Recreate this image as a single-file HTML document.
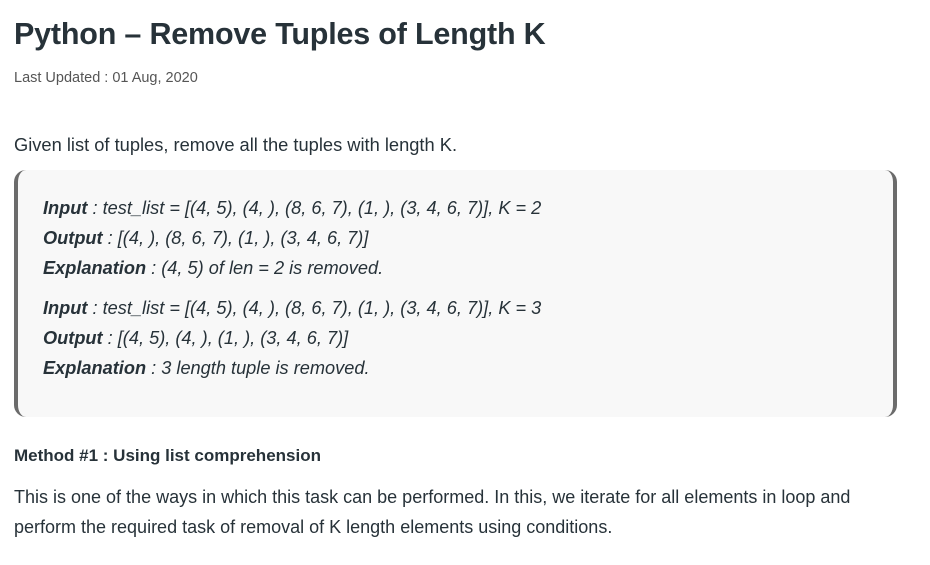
<!DOCTYPE html>
<html><head><style>
body{margin:0;background:#fff;width:930px;height:565px;overflow:hidden;font-family:"Liberation Sans",sans-serif;color:#273239}
h1{position:absolute;left:14px;top:17px;margin:0;font-size:30.5px;font-weight:bold;letter-spacing:-0.2px;color:#273239}
.upd{position:absolute;left:14px;top:70px;font-size:14.5px;color:#555}
.p1{position:absolute;left:14px;top:134px;font-size:18.3px;color:#273239}
.box{position:absolute;left:14px;top:170px;width:875px;height:247px;background:#f8f8f8;border-left:4px solid #6b6b6b;border-right:4px solid #6b6b6b;border-radius:12px}
.box div{position:absolute;left:25px;font-style:italic;font-size:18.2px;color:#273239;white-space:nowrap}
.box b{font-weight:bold}
.h3{position:absolute;left:14px;top:446px;font-size:17px;font-weight:bold;color:#273239}
.p2{position:absolute;left:14px;top:482px;font-size:18px;line-height:30px;color:#273239;width:870px}
</style></head><body>
<h1>Python – Remove Tuples of Length K</h1>
<div class="upd">Last Updated : 01 Aug, 2020</div>
<div class="p1">Given list of tuples, remove all the tuples with length K.</div>
<div class="box">
<div style="top:28px"><b>Input</b> : test_list = [(4, 5), (4, ), (8, 6, 7), (1, ), (3, 4, 6, 7)], K = 2</div>
<div style="top:58px"><b>Output</b> : [(4, ), (8, 6, 7), (1, ), (3, 4, 6, 7)]</div>
<div style="top:88px"><b>Explanation</b> : (4, 5) of len = 2 is removed.</div>
<div style="top:128px"><b>Input</b> : test_list = [(4, 5), (4, ), (8, 6, 7), (1, ), (3, 4, 6, 7)], K = 3</div>
<div style="top:158px"><b>Output</b> : [(4, 5), (4, ), (1, ), (3, 4, 6, 7)]</div>
<div style="top:188px"><b>Explanation</b> : 3 length tuple is removed.</div>
</div>
<div class="h3">Method #1 : Using list comprehension</div>
<div class="p2">This is one of the ways in which this task can be performed. In this, we iterate for all elements in loop and perform the required task of removal of K length elements using conditions.</div>
</body></html>
